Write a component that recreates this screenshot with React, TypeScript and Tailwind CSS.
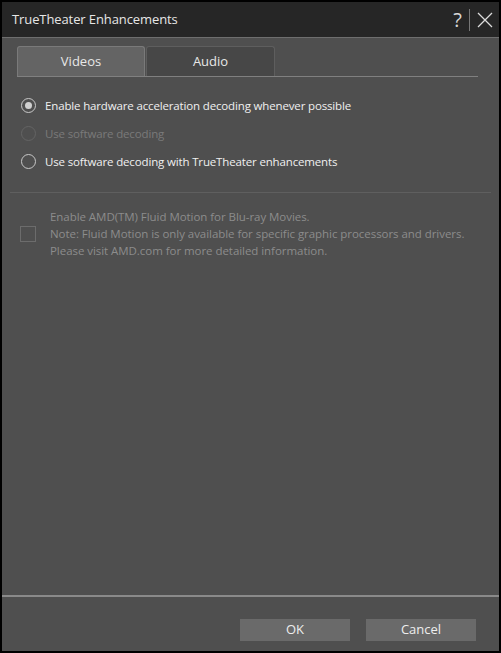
import React from "react";

function Radio({ checked, disabled }: { checked?: boolean; disabled?: boolean }) {
  return (
    <span
      className={`flex size-[15px] items-center justify-center rounded-full border ${
        disabled ? "border-[#646464]" : "border-[#c8c8c8]"
      }`}
    >
      {checked && <span className="size-[7px] rounded-full bg-[#d0d0d0]" />}
    </span>
  );
}

export default function App() {
  const font = { fontFamily: '"Segoe UI", "Open Sans", "Noto Sans", sans-serif' };
  return (
    <div className="h-[653px] w-[501px] bg-black p-[2px]" style={font}>
      <div className="flex h-full flex-col bg-[#4f4f4f]">
        {/* title bar */}
        <div className="flex h-[36px] items-center border-b border-[#6e6e6e] bg-[#262626] pl-[10px] pr-[4px]">
          <span className="flex-1 text-[13px] tracking-[-0.1px] text-[#e6e6e6]">TrueTheater Enhancements</span>
          <span className="text-[20px] leading-none text-[#d8d8d8]">?</span>
          <span className="mx-[7px] h-[22px] w-px bg-[#777]" />
          <svg width="16" height="16" viewBox="0 0 16 16" className="mr-[2px]">
            <path d="M1 1L15 15M15 1L1 15" stroke="#dcdcdc" strokeWidth="1.3" />
          </svg>
        </div>

        {/* tabs */}
        <div className="ml-[15px] mr-[21px] mt-[8px] flex border-b border-[#808080]">
          <div className="flex h-[30px] w-[128px] items-center justify-center rounded-t-[3px] border border-b-0 border-[#7a7a7a] bg-[#646464] text-[13px] text-[#e8e8e8]">
            Videos
          </div>
          <div className="ml-[1px] flex h-[30px] w-[129px] items-center justify-center rounded-t-[3px] border border-b-0 border-[#5e5e5e] bg-[#474747] text-[13px] text-[#e8e8e8]">
            Audio
          </div>
        </div>

        {/* options */}
        <div className="ml-[19px] mt-[21px] flex flex-col gap-[13px] text-[11.5px] tracking-[-0.15px]">
          <div className="flex h-[15px] items-center gap-[9px] text-[#f0f0f0]">
            <Radio checked />
            Enable hardware acceleration decoding whenever possible
          </div>
          <div className="flex h-[15px] items-center gap-[9px] text-[#7a7a7a]">
            <Radio disabled />
            Use software decoding
          </div>
          <div className="flex h-[15px] items-center gap-[9px] text-[#f0f0f0]">
            <Radio />
            Use software decoding with TrueTheater enhancements
          </div>
        </div>

        <div className="mx-[8px] mt-[23px] h-px bg-[#5f5f5f]" />

        <div className="ml-[18px] mt-[15px] flex items-center gap-[14px]">
          <span className="size-[16px] border border-[#6c6c6c]" />
          <div className="text-[11.5px] leading-[17px] tracking-[-0.05px] text-[#8c8c8c]">
            <div>Enable AMD(TM) Fluid Motion for Blu-ray Movies.</div>
            <div>Note: Fluid Motion is only available for specific graphic processors and drivers.</div>
            <div>Please visit AMD.com for more detailed information.</div>
          </div>
        </div>

        <div className="flex-1" />

        {/* footer */}
        <div className="h-[2px] bg-[#8a8a8a]" />
        <div className="flex h-[54px] items-start justify-end gap-[16px] pr-[23px] pt-[22px]">
          <button className="h-[22px] w-[110px] bg-[#6a6a6a] text-[13px] text-[#eeeeee]">OK</button>
          <button className="h-[22px] w-[110px] bg-[#6a6a6a] text-[13px] text-[#eeeeee]">Cancel</button>
        </div>
      </div>
    </div>
  );
}
